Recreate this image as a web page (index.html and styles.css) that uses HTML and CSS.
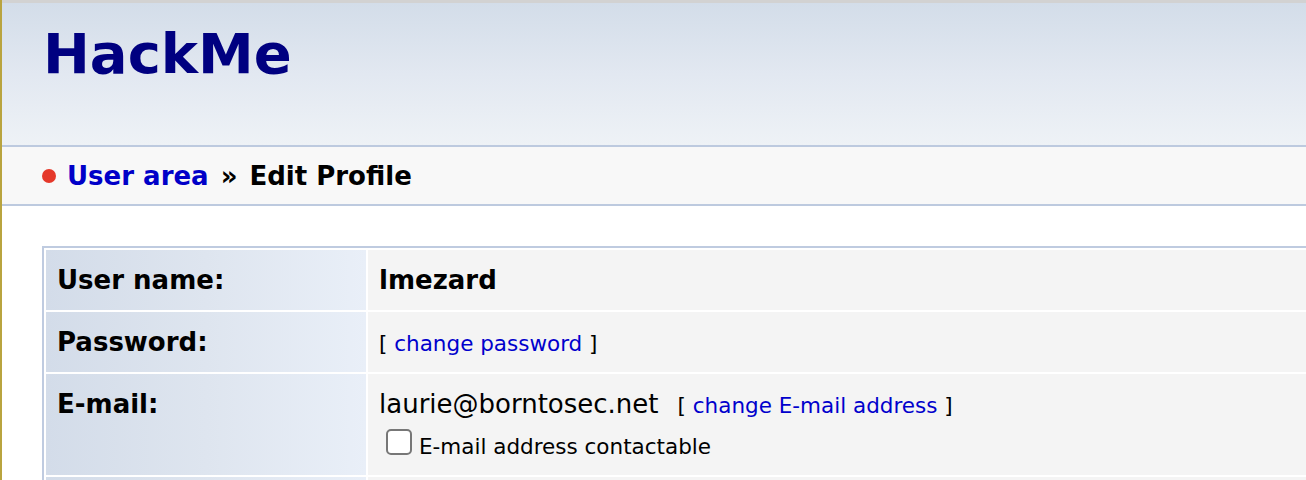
FILE: index.html
```html
<!DOCTYPE html>
<html lang="en">
<head>
<meta charset="utf-8">
<title>HackMe - Edit Profile</title>
<link rel="stylesheet" href="styles.css">
</head>
<body>
<div class="page">
  <header class="header">
    <h1 class="logo">HackMe</h1>
  </header>
  <nav class="crumbs">
    <span class="dot"></span>
    <a class="crumb-link" href="#">User area</a>
    <span class="crumb-sep">»</span>
    <span class="crumb-current">Edit Profile</span>
  </nav>
  <div class="content">
    <table class="profile">
      <tr>
        <td class="label">User name:</td>
        <td class="value"><strong class="username">lmezard</strong></td>
      </tr>
      <tr>
        <td class="label">Password:</td>
        <td class="value"><span class="small">[ <a class="link" href="#">change password</a> ]</span></td>
      </tr>
      <tr>
        <td class="label top">E-mail:</td>
        <td class="value top">
          <div class="email-line">laurie@borntosec.net<span class="small action">[ <a class="link" href="#">change E-mail address</a> ]</span></div>
          <div class="check-line small"><span class="checkbox"></span>E-mail address contactable</div>
        </td>
      </tr>
      <tr>
        <td class="label">&nbsp;</td>
        <td class="value">&nbsp;</td>
      </tr>
    </table>
  </div>
</div>
</body>
</html>
```
FILE: styles.css
```css
html, body {
  margin: 0;
  padding: 0;
  overflow: hidden;
  background: #ffffff;
}

body {
  font-family: "DejaVu Sans", Verdana, sans-serif;
  color: #000;
}

.page {
  border-left: 2px solid #b9a43f;
  min-height: 480px;
}

.header {
  border-top: 3px solid #d2d2d2;
  border-bottom: 2px solid #bdcadf;
  height: 142px;
  box-sizing: content-box;
  background: linear-gradient(to bottom, #d3dde9 0%, #e2e8f1 50%, #eef2f6 100%);
  padding-left: 41px;
}

.logo {
  margin: 0;
  padding-top: 18px;
  font-size: 56px;
  font-weight: bold;
  color: #000080;
  line-height: normal;
}

.crumbs {
  height: 57px;
  background: #f8f8f8;
  border-bottom: 2px solid #bdcadf;
  display: flex;
  align-items: center;
  padding-left: 40px;
  font-size: 26px;
  font-weight: bold;
}

.dot {
  width: 14px;
  height: 14px;
  border-radius: 50%;
  background: #e5382a;
  margin-right: 11px;
}

.crumb-link {
  color: #0000c8;
  text-decoration: none;
}

.crumb-sep {
  margin: 0 12px 0 12px;
}

.content {
  padding: 40px 0 0 40px;
}

.profile {
  width: 1400px;
  border: 2px solid #bfcbe0;
  border-spacing: 2px;
  background: #fff;
}

.profile td {
  padding: 15px 11px;
  font-size: 26px;
  vertical-align: middle;
}

.profile td.top {
  vertical-align: top;
}

.label {
  width: 298px;
  font-weight: bold;
  background: linear-gradient(to right, #d3dce9 0%, #dee5ef 50%, #e9eff8 100%);
}

.value {
  background: #f4f4f4;
}

.username {
  font-weight: bold;
}

.small {
  font-size: 21.5px;
}

.link {
  color: #0000cc;
  text-decoration: none;
}

.action {
  margin-left: 19px;
}

.check-line {
  margin-top: 10px;
  padding-bottom: 1px;
}

.checkbox {
  display: inline-block;
  width: 22px;
  height: 22px;
  border: 2px solid #777;
  border-radius: 5px;
  background: #fff;
  margin: 0 7px 0 7px;
  vertical-align: -1px;
}
```
